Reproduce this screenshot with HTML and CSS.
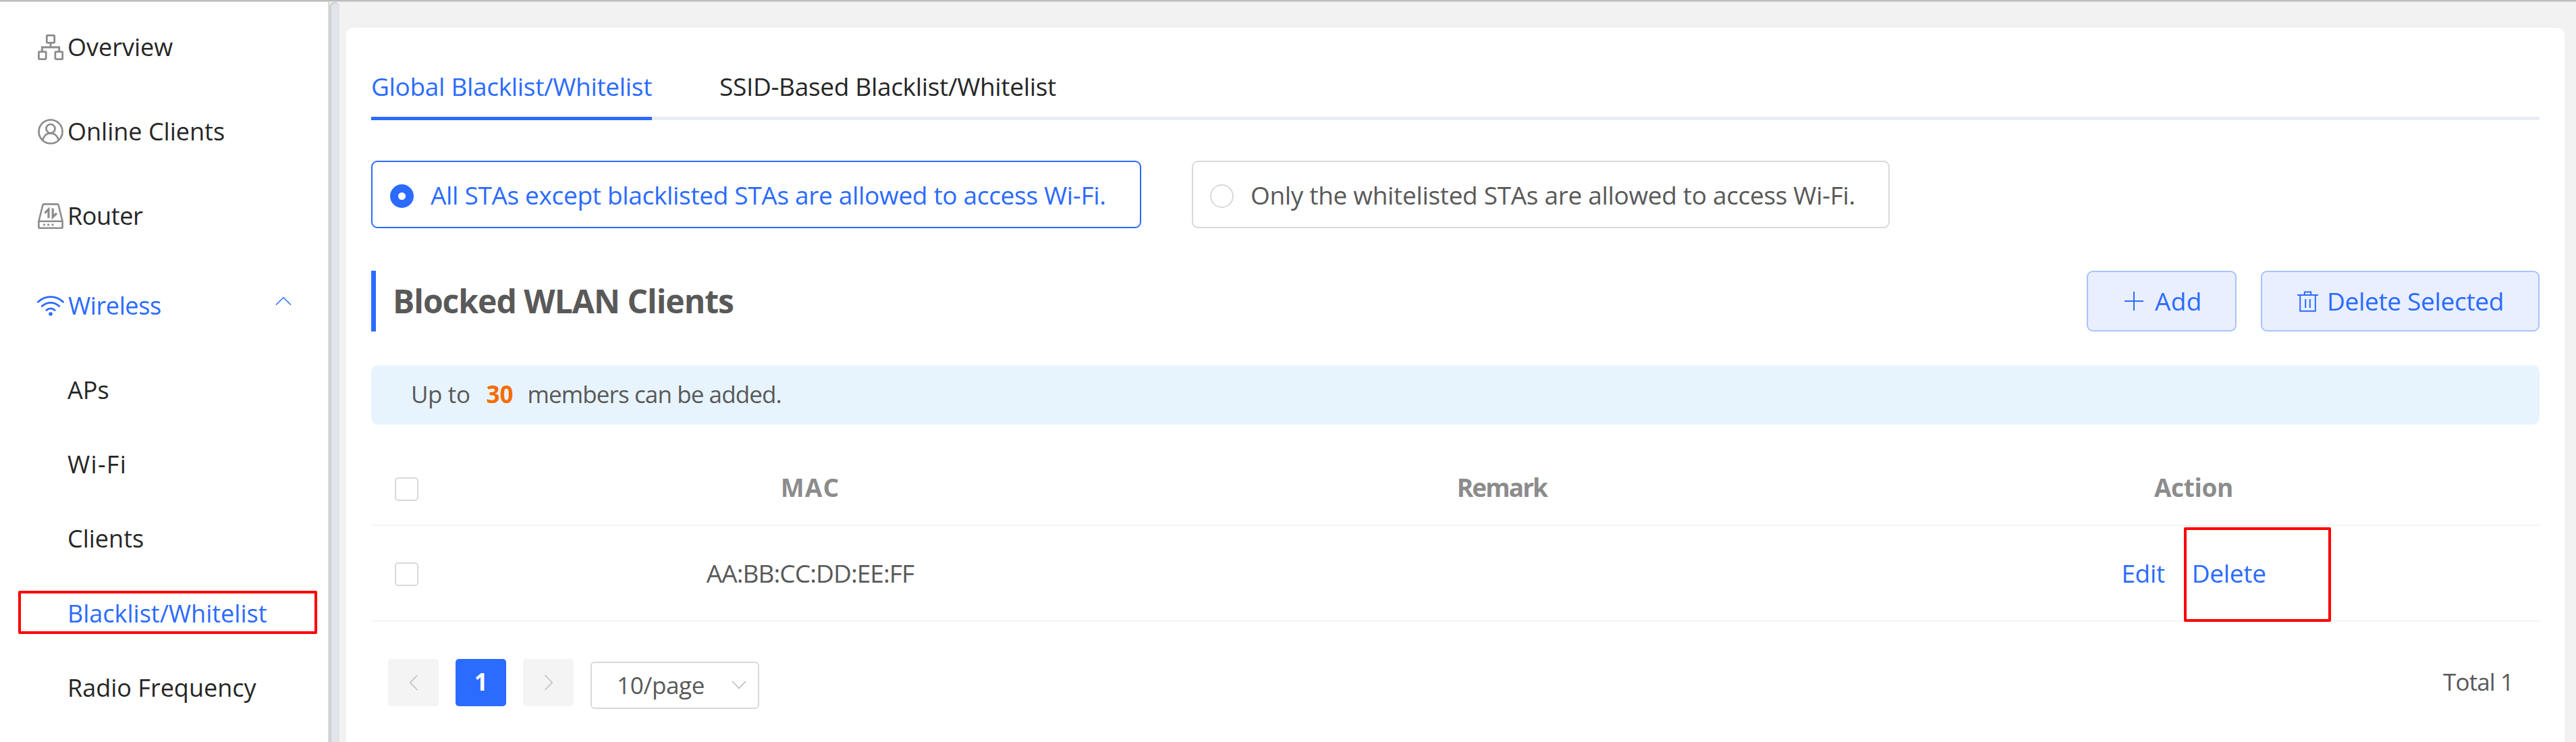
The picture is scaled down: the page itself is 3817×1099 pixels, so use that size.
FILE: index.html
```html
<!DOCTYPE html>
<html lang="en">
<head>
  <meta charset="UTF-8">
  <meta name="viewport" content="width=device-width, initial-scale=1.0">
  <title>Blacklist/Whitelist</title>
  <link rel="stylesheet" href="styles.css">
</head>
<body>
  <div class="topline"></div>
  <div class="layout">
    <!-- Side menu -->
    <nav class="sidebar">
      <a class="menu-item">
        <svg class="menu-icon" viewBox="0 0 38 38" fill="none" stroke="currentColor" stroke-width="2.8">
          <rect x="13.3" y="1.4" width="11.4" height="11" rx="1"/>
          <rect x="1.4" y="25.6" width="10.8" height="11" rx="1"/>
          <rect x="25.9" y="25.6" width="10.8" height="11" rx="1"/>
          <path d="M19 12.3V19M6.3 25.7V19H31.7V25.7"/>
        </svg>
        <span>Overview</span>
      </a>
      <a class="menu-item">
        <svg class="menu-icon" viewBox="0 0 38 38" fill="none" stroke="currentColor" stroke-width="2.7">
          <circle cx="19" cy="19" r="17.5"/>
          <circle cx="19" cy="14.5" r="6.5"/>
          <path d="M7 32C8.5 25.5 13 21.3 19 21.3S29.5 25.5 31 32"/>
        </svg>
        <span>Online Clients</span>
      </a>
      <a class="menu-item">
        <svg class="menu-icon" viewBox="0 0 38 38" fill="none" stroke="currentColor" stroke-width="2.6">
          <path d="M1.4 26.8L7.4 2.6Q7.8 1.4 9 1.4H29Q30.2 1.4 30.6 2.6L36.6 26.8V35.6Q36.6 36.8 35.4 36.8H2.6Q1.4 36.8 1.4 35.6V26.8H36.6"/>
          <path d="M10.2 14.6L16 9V22M22.2 7.5V20.5L28 14.8" stroke-width="3.2"/>
          <path d="M8 31.8h2.8M14.2 31.8h2.8M20.6 31.8h2.8" stroke-width="2.8"/>
        </svg>
        <span class="t-tight">Router</span>
      </a>
      <a class="menu-item menu-parent active">
        <svg class="menu-icon wifi-icon" viewBox="0 0 40 30" fill="none" stroke="currentColor" stroke-width="2.8" stroke-linecap="round">
          <path d="M1.4 9.2C12 -1 28 -1 38.6 9.2"/>
          <path d="M7.2 15.6C14.5 8.6 25.5 8.6 32.8 15.6"/>
          <path d="M13.8 21.6C17.4 18 22.6 18 26.2 21.6"/>
          <circle cx="20" cy="27" r="2.8" fill="currentColor" stroke="none"/>
        </svg>
        <span class="t-tight">Wireless</span>
        <svg class="menu-arrow" viewBox="0 0 24 14" fill="none" stroke="currentColor" stroke-width="1.6">
          <path d="M1 12.5L12 1.8L23 12.5"/>
        </svg>
      </a>
      <a class="sub-item">APs</a>
      <a class="sub-item t-wifi">Wi-Fi</a>
      <a class="sub-item">Clients</a>
      <a class="sub-item active marked">Blacklist/Whitelist</a>
      <a class="sub-item">Radio Frequency</a>
    </nav>
    <div class="scrollbar"></div>

    <!-- Content -->
    <main class="card">
      <div class="tabs">
        <a class="tab active">Global Blacklist/Whitelist</a>
        <a class="tab">SSID-Based Blacklist/Whitelist</a>
      </div>

      <div class="options">
        <label class="option checked"><i class="radio"></i>All STAs except blacklisted STAs are allowed to access Wi-Fi.</label>
        <label class="option"><i class="radio"></i>Only the whitelisted STAs are allowed to access Wi-Fi.</label>
      </div>

      <div class="header">
        <h2 class="title">Blocked WLAN Clients</h2>
        <button class="btn btn-add">
          <svg class="plus-icon" viewBox="0 0 28 28" fill="none" stroke="currentColor" stroke-width="2">
            <path d="M14 0V28M0 14H28"/>
          </svg>
          <span class="t-add">Add</span>
        </button>
        <button class="btn btn-delete">
          <svg class="trash-icon" viewBox="0 0 31 31" fill="none" stroke="currentColor" stroke-width="2">
            <path d="M0 6H31M10.8 6V1.6H20.2V6M4.2 6V29.8H26.8V6"/>
            <path d="M12.2 12V25M18.8 12V25"/>
          </svg>
          <span>Delete Selected</span>
        </button>
      </div>

      <div class="notice"><span class="t-upto">Up to</span><b>30</b><span>members can be added.</span></div>

      <table class="table">
        <thead>
          <tr>
            <th class="col-check"><i class="checkbox"></i></th>
            <th class="t-mac">MAC</th>
            <th class="t-remark">Remark</th>
            <th>Action</th>
          </tr>
        </thead>
        <tbody>
          <tr>
            <td><i class="checkbox"></i></td>
            <td class="t-addr">AA:BB:CC:DD:EE:FF</td>
            <td></td>
            <td><div class="actions"><a>Edit</a><a class="delete-link">Delete</a></div></td>
          </tr>
        </tbody>
      </table>

      <div class="pagination">
        <span class="page-btn">
          <svg class="page-arrow" viewBox="0 0 14 24" fill="none" stroke="currentColor" stroke-width="1.6"><path d="M12.5 1L1.8 12L12.5 23"/></svg>
        </span>
        <span class="page-btn current">1</span>
        <span class="page-btn">
          <svg class="page-arrow" viewBox="0 0 14 24" fill="none" stroke="currentColor" stroke-width="1.6"><path d="M1.5 1L12.2 12L1.5 23"/></svg>
        </span>
        <span class="page-size">
          <span>10/page</span>
          <svg class="select-arrow" viewBox="0 0 22 13" fill="none" stroke="currentColor" stroke-width="1.6"><path d="M1 1L11 11.5L21 1"/></svg>
        </span>
        <span class="total">Total 1</span>
      </div>
    </main>
  </div>
</body>
</html>
```
FILE: styles.css
```css
*,
*::after {
  box-sizing: border-box;
}

body {
  margin: 0;
  height: 1099px;
  overflow: hidden;
  background: #f2f2f2;
  color: #595959;
  font-family: "Open Sans", "Noto Sans", sans-serif;
  font-size: 37px;
  letter-spacing: -0.32px;
}

/* Shadow of the page header */
.topline {
  height: 3px;
  background: linear-gradient(#b9b9b9 1px, #c2c2c2 1px, #c2c2c2 2px, #dadada 2px);
}

.layout {
  display: flex;
  height: 1096px;
}

/* Side menu */
.sidebar {
  width: 488px;
  flex: none;
  padding-top: 4px;
  background: #fff;
  border-right: 2px solid #d9d9d9;
  color: #262626;
  font-size: 36px;
  letter-spacing: 0;
}

.menu-item {
  display: flex;
  align-items: center;
  gap: 6px;
  height: 125px;
  padding-left: 56px;
}

.menu-parent {
  height: 141px;
  padding-left: 55px;
  gap: 6px;
}

.menu-icon {
  width: 38px;
  height: 38px;
  flex: none;
  color: #8c8c8c;
}

.wifi-icon {
  width: 40px;
  height: 30px;
}

.menu-arrow {
  width: 24px;
  height: 14px;
  margin: 0 54px 14px auto;
}

.active,
.active .menu-icon {
  color: #2b6bff;
}

.sub-item {
  display: block;
  height: 110.2px;
  line-height: 110px;
  padding-left: 100px;
}

/* Red frame over the selected menu entry */
.marked {
  position: relative;
}

.marked::after {
  content: "";
  position: absolute;
  left: 27px;
  top: 21px;
  width: 443px;
  height: 64px;
  border: 4px solid #f00;
  border-radius: 2px;
}

.scrollbar {
  width: 15px;
  flex: none;
  background: #e1e5e9;
  border-left: 3px solid #cbd0d2;
  border-top: 2px solid #cbd0d2;
  border-radius: 8px 8px 0 0;
}

/* Content card */
.card {
  flex: 1;
  margin: 38px 17px 0 10px;
  padding: 41px 37px 0;
  background: #fff;
  border-radius: 10px 10px 0 0;
}

.tabs {
  display: flex;
  gap: 100px;
  border-bottom: 5px solid #e9edf5;
}

.tab {
  height: 96px;
  margin-bottom: -5px;
  line-height: 91px;
  color: #262626;
}

.tab.active {
  color: #2b6bff;
  border-bottom: 5px solid #2b6bff;
}

.options {
  display: flex;
  gap: 75px;
  margin-top: 60px;
}

.option {
  display: flex;
  align-items: center;
  height: 100px;
  width: 1034px;
  padding-left: 25px;
  border: 2px solid #d9d9d9;
  border-radius: 9px;
  white-space: nowrap;
}

.option.checked {
  width: 1141px;
  padding-left: 26px;
  border-color: #2b6bff;
  color: #2b6bff;
}

.radio {
  width: 35px;
  height: 35px;
  margin: 4px 25px 0 0;
  border: 2px solid #d9d9d9;
  border-radius: 50%;
}

.checked .radio {
  border: 12px solid #2b6bff;
}

/* Section header */
.header {
  display: flex;
  height: 90px;
  margin-top: 63px;
}

.title {
  flex: 1;
  margin: 0;
  padding-left: 25px;
  border-left: 7px solid #2b6bff;
  line-height: 89px;
  font-size: 48px;
  font-weight: 700;
  letter-spacing: -1px;
}

.btn {
  display: flex;
  align-items: center;
  height: 90px;
  padding: 0 0 2px;
  border: 2px solid #a9c3ff;
  border-radius: 9px;
  background: #e9efff;
  color: #2b6bff;
  font: inherit;
  letter-spacing: inherit;
}

.btn-add {
  width: 222px;
  padding-left: 54px;
  gap: 17px;
}

.btn-delete {
  width: 413px;
  margin-left: 36px;
  padding-left: 52px;
  gap: 13px;
}

.plus-icon {
  width: 28px;
  height: 28px;
  margin-top: 2px;
}

.trash-icon {
  width: 31px;
  height: 31px;
  margin-top: 2px;
}

.notice {
  height: 88px;
  margin-top: 50px;
  padding-left: 59px;
  line-height: 85px;
  border-radius: 10px;
  background: #e7f4fe;
  font-size: 35px;
  letter-spacing: -0.9px;
}

.notice b {
  margin: 0 21px 0 24px;
  color: #f56c00;
  letter-spacing: 0;
}

/* Client list */
.table {
  width: 100%;
  margin-top: 37px;
  table-layout: fixed;
  border-collapse: separate;
  border-spacing: 0;
  text-align: center;
}

.table th,
.table td {
  padding: 0;
  border-bottom: 2px solid #f0f5fa;
}

.table th {
  height: 113px;
  color: #8c8c8c;
}

.table td {
  height: 142px;
  padding-bottom: 2px;
}

.table .col-check {
  width: 138px;
}

.checkbox {
  display: block;
  width: 35px;
  height: 35px;
  margin: 5px 0 0 35px;
  border: 2px solid #d9d9d9;
  border-radius: 5px;
}

.actions {
  display: flex;
  justify-content: center;
  gap: 40px;
  color: #2b6bff;
}

/* Red frame over the delete link */
.delete-link {
  position: relative;
}

.delete-link::after {
  content: "";
  position: absolute;
  left: -12px;
  top: -42px;
  width: 218px;
  height: 140px;
  border: 4px solid #f00;
  border-radius: 2px;
}

/* Pagination */
.pagination {
  display: flex;
  gap: 25px;
  margin-top: 55px;
  padding: 0 39px 0 25px;
  font-size: 35px;
}

.page-btn {
  display: flex;
  align-items: center;
  justify-content: center;
  width: 75px;
  height: 70px;
  border-radius: 5px;
  background: #f4f4f4;
  color: #bfbfbf;
}

.page-btn.current {
  padding-bottom: 3px;
  background: #2b6bff;
  color: #fff;
  font-weight: 700;
}

.page-arrow {
  width: 14px;
  height: 24px;
}

.page-size {
  display: flex;
  align-items: center;
  justify-content: space-between;
  width: 250px;
  height: 70px;
  margin-top: 4px;
  padding: 0 17px 2px 37px;
  border: 2px solid #d9d9d9;
  border-radius: 6px;
}

.select-arrow {
  width: 22px;
  height: 13px;
  color: #bfbfbf;
}

.total {
  margin-left: auto;
  line-height: 67px;
  letter-spacing: -0.9px;
}

/* Tracking of single labels */
.t-tight { letter-spacing: -0.4px; }
.t-wifi { letter-spacing: 1.3px; }
.t-add { letter-spacing: 0.4px; }
.t-upto { letter-spacing: -0.4px; }
.t-mac { letter-spacing: 1.2px; }
.t-remark { letter-spacing: -1.9px; }
.t-addr { letter-spacing: -0.9px; }
```
